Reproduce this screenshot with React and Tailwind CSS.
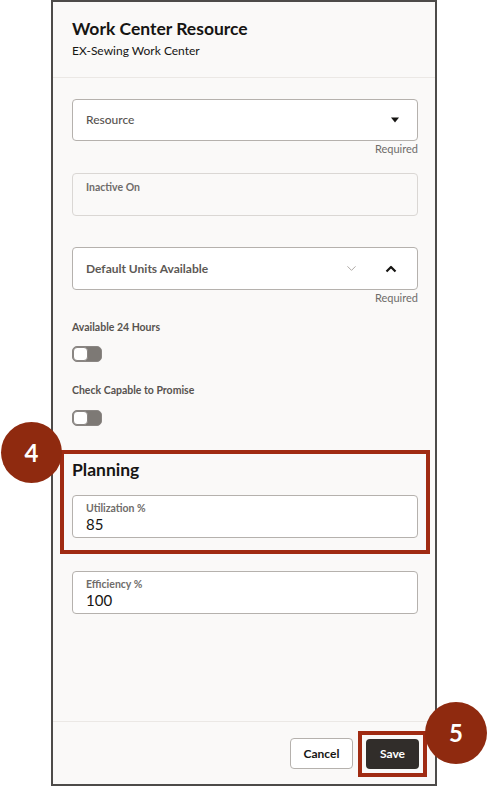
import { ChevronDown } from 'lucide-react';

const FONT = { fontFamily: 'Lato, "Noto Sans", Arial, sans-serif' };

function Caret() {
  return (
    <svg width="10" height="6" viewBox="0 0 10 6" aria-hidden="true">
      <path d="M1 0.5h8L5 5.5z" fill="#161513" />
    </svg>
  );
}

function CaretUp() {
  return (
    <svg width="12" height="8" viewBox="0 0 12 8" aria-hidden="true">
      <path d="M1.5 6.5L6 2l4.5 4.5" fill="none" stroke="#161513" strokeWidth="2.2" strokeLinejoin="round" />
    </svg>
  );
}

function Toggle() {
  return (
    <div className="flex h-[16px] w-[30px] items-center rounded-[5px] border border-[#8a8683] bg-[#7d7975] p-0">
      <div className="h-[14px] w-[15px] rounded-[4px] border border-[#8a8683] bg-white" />
    </div>
  );
}

function Required() {
  return <div className="mt-[1px] text-right text-[11px] leading-[14px] text-[#6f6c6a]">Required</div>;
}

function ValueField({ label, value }) {
  return (
    <div className="flex h-[43px] flex-col justify-center rounded-[4px] border border-[#b5b1ad] bg-white px-[13px]">
      <div className="text-[10.5px] font-bold leading-[14px] text-[#6f6c6a]">{label}</div>
      <div className="text-[15px] leading-[18px] text-[#161513]">{value}</div>
    </div>
  );
}

export default function App() {
  return (
    <div className="relative min-h-[787px] w-[487px] bg-white" style={FONT}>
      <div className="ml-[51px] flex h-[786px] w-[386px] flex-col border-2 border-[#4d4b49] bg-[#faf9f8]">
        <header className="border-b border-[#ebe8e5] pb-[17px] pl-[19px] pr-[17px] pt-[15px]">
          <h1 className="text-[17.5px] font-bold leading-[24px] text-[#161513]">Work Center Resource</h1>
          <p className="mt-[1px] text-[12px] leading-[18px] text-[#161513]">EX-Sewing Work Center</p>
        </header>

        <div className="flex flex-1 flex-col pl-[19px] pr-[17px] pt-[21px]">
          <div>
            <div className="flex h-[42px] items-center justify-between rounded-[4px] border border-[#b5b1ad] bg-white pl-[13px] pr-[17px]">
              <span className="text-[12px] font-medium text-[#57534f]">Resource</span>
              <Caret />
            </div>
            <Required />
          </div>

          <div className="mt-[17px] h-[43px] rounded-[4px] border border-[#dad7d4] px-[13px] pt-[6px]">
            <div className="text-[10.5px] font-bold leading-[14px] text-[#6f6c6a]">Inactive On</div>
          </div>

          <div className="mt-[31px]">
            <div className="flex h-[43px] items-center rounded-[4px] border border-[#b5b1ad] bg-white pl-[13px] pr-[20px]">
              <span className="flex-1 text-[12px] font-bold text-[#5d5955]">Default Units Available</span>
              <ChevronDown size={15} strokeWidth={1.5} color="#a7a29e" className="mr-[26px]" />
              <CaretUp />
            </div>
            <Required />
          </div>

          <div className="mt-[15px] text-[10.5px] font-bold leading-[14px] text-[#57534f]">Available 24 Hours</div>
          <div className="mt-[12px]">
            <Toggle />
          </div>

          <div className="mt-[21px] text-[10.5px] font-bold leading-[14px] text-[#57534f]">Check Capable to Promise</div>
          <div className="mt-[13px]">
            <Toggle />
          </div>

          <section className="-ml-[12px] -mr-[12px] mt-[24px] border-4 border-[#a02b12] pb-[12px] pl-[8px] pr-[8px] pt-[4px]">
            <h2 className="text-[17.5px] font-bold leading-[24px] text-[#161513]">Planning</h2>
            <div className="mt-[13px]">
              <ValueField label="Utilization %" value="85" />
            </div>
          </section>

          <div className="mt-[17px]">
            <ValueField label="Efficiency %" value="100" />
          </div>
        </div>

        <footer className="flex items-center justify-end gap-[14px] border-t border-[#ebe8e5] pb-[15px] pl-[19px] pr-[17px] pt-[16px]">
          <button className="h-[31px] w-[63px] rounded-[4px] border border-[#b5b1ad] bg-white text-[12px] font-bold text-[#161513]">
            Cancel
          </button>
          <div className="-m-[9px] border-4 border-[#a02b12] p-[4px]">
            <button className="block h-[30px] w-[53px] rounded-[4px] bg-[#312d2a] text-[12px] font-bold text-white">
              Save
            </button>
          </div>
        </footer>
      </div>

      <div className="absolute left-[1px] top-[422px] flex h-[61px] w-[61px] items-center justify-center rounded-full bg-[#8f2a0f] text-[24px] font-bold text-white">
        4
      </div>
      <div className="absolute left-[425px] top-[702px] flex h-[62px] w-[62px] items-center justify-center rounded-full bg-[#8f2a0f] text-[24px] font-bold text-white">
        5
      </div>
    </div>
  );
}
